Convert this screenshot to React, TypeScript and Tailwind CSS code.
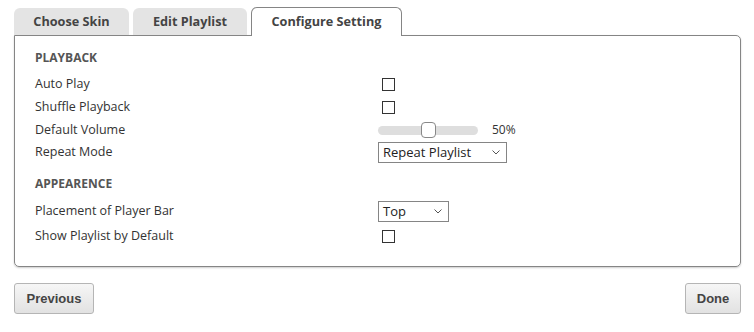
import { useState } from "react";

const font = { fontFamily: '"Open Sans", "Noto Sans", sans-serif' };

function Checkbox({ checked, onChange }: { checked: boolean; onChange: () => void }) {
  return (
    <button
      type="button"
      onClick={onChange}
      className="ml-[4px] flex h-[13px] w-[13px] items-center justify-center border border-[#333] bg-white"
    >
      {checked && <span className="h-[7px] w-[7px] bg-[#333]" />}
    </button>
  );
}

function Select({ value, width }: { value: string; width: string }) {
  return (
    <div
      className={`flex h-[21px] items-center justify-between border border-[#858585] bg-white pl-[4px] pr-[6px] text-[13px] text-[#222] ${width}`}
    >
      <span>{value}</span>
      <svg width="8" height="5" viewBox="0 0 8 5" fill="none" stroke="#555" strokeWidth="1">
        <path d="M0.5 0.5 L4 4 L7.5 0.5" />
      </svg>
    </div>
  );
}

function Row({ label, h, children }: { label: string; h: string; children: React.ReactNode }) {
  return (
    <div className={`flex items-center ${h}`}>
      <div className="w-[343px] text-[12.5px] text-[#333]">{label}</div>
      <div className="flex items-center">{children}</div>
    </div>
  );
}

export default function App() {
  const [auto, setAuto] = useState(false);
  const [shuffle, setShuffle] = useState(false);
  const [showList, setShowList] = useState(false);
  const tabs = ["Choose Skin", "Edit Playlist", "Configure Setting"];
  const widths = ["w-[115px]", "w-[114px]", "w-[151px]"];

  return (
    <div className="h-[332px] w-[754px] bg-white pl-[14px] pr-[13px] pt-[7px]" style={font}>
      {/* tabs */}
      <div className="flex items-end gap-[4px]">
        {tabs.map((t, i) =>
          i === 2 ? (
            <div
              key={t}
              className={`relative z-10 -mb-px flex h-[29px] items-center justify-center rounded-t-[6px] border border-b-0 border-[#858585] bg-white text-[12.7px] font-bold text-[#444] ${widths[i]}`}
            >
              {t}
            </div>
          ) : (
            <div
              key={t}
              className={`flex h-[27px] items-center justify-center rounded-t-[6px] bg-[#e4e4e4] text-[12.7px] font-bold text-[#444] ${widths[i]}`}
            >
              {t}
            </div>
          )
        )}
      </div>

      {/* panel */}
      <div className="h-[232px] rounded-b-[5px] rounded-tr-[5px] border border-[#858585] pl-[20px] pt-[14px] shadow-[0_1px_2px_rgba(0,0,0,0.2)]">
        <div className="flex h-[16px] items-center text-[12px] font-bold text-[#555]">PLAYBACK</div>
        <div className="mt-[7px]">
          <Row label="Auto Play" h="h-[23px]">
            <Checkbox checked={auto} onChange={() => setAuto(!auto)} />
          </Row>
          <Row label="Shuffle Playback" h="h-[23px]">
            <Checkbox checked={shuffle} onChange={() => setShuffle(!shuffle)} />
          </Row>
          <Row label="Default Volume" h="h-[22px]">
            <div className="relative flex h-[16px] w-[100px] items-center">
              <div className="h-[9px] w-full rounded-full bg-[#dedede]" />
              <div className="absolute left-[43px] top-0 h-[16px] w-[15px] rounded-[4px] border border-[#888] bg-white" />
            </div>
            <span className="ml-[14px] text-[12px] text-[#333]">50%</span>
          </Row>
          <Row label="Repeat Mode" h="h-[23px]">
            <Select value="Repeat Playlist" width="w-[129px]" />
          </Row>
        </div>

        <div className="mt-[12px] flex h-[16px] items-center text-[12px] font-bold text-[#555]">APPEARENCE</div>
        <div className="mt-[7px]">
          <Row label="Placement of Player Bar" h="h-[25px]">
            <Select value="Top" width="w-[71px]" />
          </Row>
          <Row label="Show Playlist by Default" h="h-[24px]">
            <Checkbox checked={showList} onChange={() => setShowList(!showList)} />
          </Row>
        </div>
      </div>

      {/* footer buttons */}
      <div className="mt-[16px] flex justify-between" style={{ fontFamily: '"Liberation Sans", Arial, sans-serif' }}>
        <button
          type="button"
          className="h-[31px] w-[80px] rounded-[3px] border border-[#b5b5b5] bg-gradient-to-b from-[#f6f6f6] to-[#e2e2e2] text-[13px] font-bold text-[#444]"
        >
          Previous
        </button>
        <button
          type="button"
          className="h-[31px] w-[56px] rounded-[3px] border border-[#b5b5b5] bg-gradient-to-b from-[#f6f6f6] to-[#e2e2e2] text-[13px] font-bold text-[#444]"
        >
          Done
        </button>
      </div>
    </div>
  );
}
